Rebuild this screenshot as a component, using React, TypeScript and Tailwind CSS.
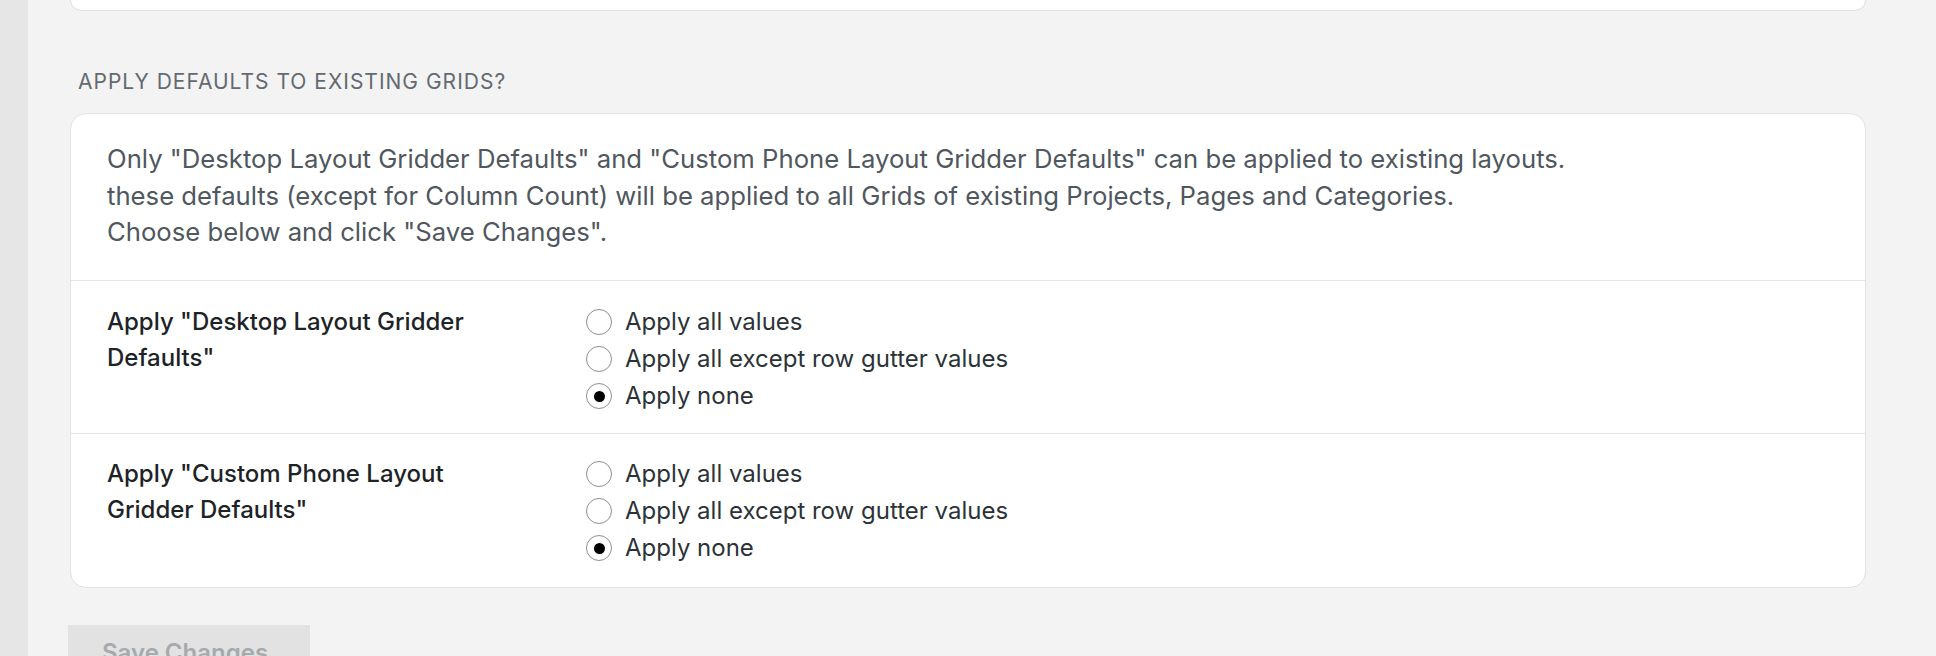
import React from "react";

function Radio({ checked, label }: { checked?: boolean; label: string }) {
  return (
    <label className="flex items-center h-[37px]">
      <span className="flex items-center justify-center w-[26px] h-[26px] rounded-full border-[1.5px] border-[#8c8f94] bg-white shrink-0">
        {checked ? <span className="block w-[11px] h-[11px] rounded-full bg-black" /> : null}
      </span>
      <span className="ml-[13px] text-[24px] text-[#2c3338]">{label}</span>
    </label>
  );
}

function Row({ label, last }: { label: React.ReactNode; last?: boolean }) {
  return (
    <div className={"flex pl-[36px] " + (last ? "pt-[22px] pb-[20px]" : "pt-[23px] pb-[18px] border-b border-[#e5e5e5]")}>
      <div className="w-[479px] shrink-0">
        <div className="max-w-[400px] text-[24px] leading-[36px] font-medium text-[#1d2327]">{label}</div>
      </div>
      <div className="flex flex-col">
        <Radio label="Apply all values" />
        <Radio label="Apply all except row gutter values" />
        <Radio checked label="Apply none" />
      </div>
    </div>
  );
}

export default function App() {
  return (
    <div className="flex h-[656px] overflow-hidden bg-[#f3f3f3]" style={{ fontFamily: "Inter, 'Noto Sans', sans-serif" }}>
      <div className="w-[28px] shrink-0 bg-[#e6e6e6]" />
      <div className="flex-1 pl-[42px] pr-[70px]">
        <div className="h-[11px] bg-white border-x border-b border-[#e2e2e2] rounded-b-[16px]" />
        <h2 className="mt-[56px] ml-[8px] text-[21px] leading-[30px] uppercase tracking-[1px] text-[#646970]">
          Apply defaults to existing grids?
        </h2>
        <div className="mt-[16px] bg-white border border-[#e2e2e2] rounded-[16px]">
          <div className="pl-[36px] pt-[27px] pb-[29px] border-b border-[#e5e5e5] text-[25.7px] leading-[36.5px] text-[#50575e]">
            <p>Only "Desktop Layout Gridder Defaults" and "Custom Phone Layout Gridder Defaults" can be applied to existing layouts.</p>
            <p>these defaults (except for Column Count) will be applied to all Grids of existing Projects, Pages and Categories.</p>
            <p>Choose below and click "Save Changes".</p>
          </div>
          <Row label={<>Apply "Desktop Layout Gridder Defaults"</>} />
          <Row label={<>Apply "Custom Phone Layout Gridder Defaults"</>} last />
        </div>
        <div className="mt-[37px] -ml-[2px] w-[242px] h-[60px] bg-[#e2e2e2] pl-[34px] pt-[10px] text-[24px] leading-[36px] font-semibold text-[#a7aaad]">
          Save Changes
        </div>
      </div>
    </div>
  );
}
